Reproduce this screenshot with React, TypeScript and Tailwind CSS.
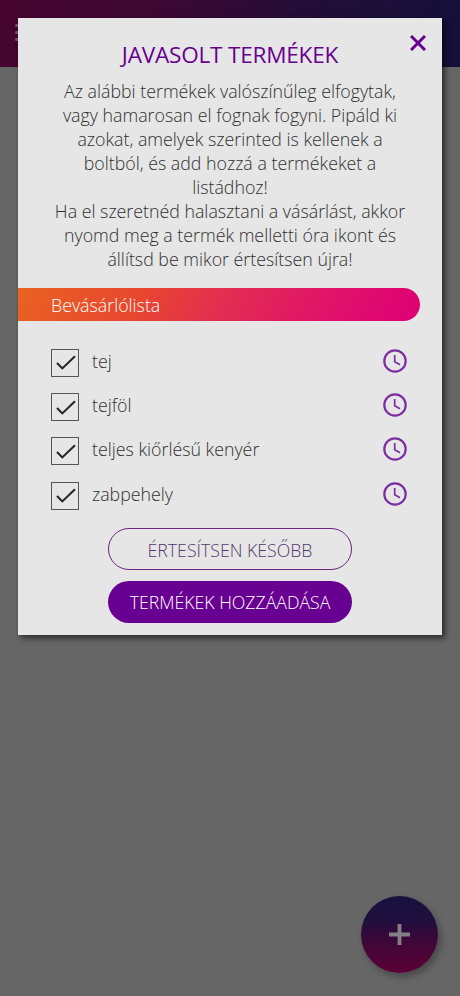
import React from "react";

const products = ["tej", "tejföl", "teljes kiőrlésű kenyér", "zabpehely"];

const infoLines = [
  "Az alábbi termékek valószínűleg elfogytak,",
  "vagy hamarosan el fognak fogyni. Pipáld ki",
  "azokat, amelyek szerinted is kellenek a",
  "boltból, és add hozzá a termékeket a",
  "listádhoz!",
  "Ha el szeretnéd halasztani a vásárlást, akkor",
  "nyomd meg a termék melletti óra ikont és",
  "állítsd be mikor értesítsen újra!",
];

function ClockIcon() {
  return (
    <svg width="24" height="24" viewBox="0 0 24 24" fill="none" stroke="#7c2ea3">
      <circle cx="12" cy="12" r="10.7" strokeWidth="2.2" />
      <path d="M11.7 6v6.7l5.3 3.1" strokeWidth="1.7" />
    </svg>
  );
}

function ProductRow({ name }: { name: string }) {
  return (
    <li className="flex h-[44.4px] items-center">
      <span className="mt-[4px] flex h-7 w-7 items-center justify-center border border-[#555]">
        <svg width="20" height="16" viewBox="0 0 20 16" fill="none" stroke="#262626" strokeWidth="2.1" className="mt-px ml-px">
          <path d="M1 8l5.3 5.4L19 1.3" />
        </svg>
      </span>
      <span className="ml-[13px] flex-1 text-[17.8px] leading-6">{name}</span>
      <button aria-label="Emlékeztető">
        <ClockIcon />
      </button>
    </li>
  );
}

export default function App() {
  return (
    <div className="relative h-[996px] w-[460px] overflow-hidden bg-[#666] font-['Open_Sans',sans-serif] font-light text-[#303030]">
      <header className="flex h-[67px] items-start bg-[linear-gradient(100deg,#46052f_0%,#3c0833_35%,#220d37_65%,#15103a_100%)] pt-6 pl-[15px]">
        <div className="flex flex-col gap-[4px]">
          <span className="h-[3px] w-6 rounded-full bg-[#77536d]" />
          <span className="h-[3px] w-6 rounded-full bg-[#77536d]" />
          <span className="h-[3px] w-6 rounded-full bg-[#77536d]" />
        </div>
      </header>

      <button
        aria-label="Új lista"
        className="absolute top-[896px] left-[361px] flex h-[77px] w-[77px] items-center justify-center rounded-full bg-[linear-gradient(180deg,#18113f_0%,#1e0f3e_30%,#400638_62%,#5b0036_100%)] shadow-[3px_4px_7px_rgba(0,0,0,0.3)]"
      >
        <svg width="21" height="21" viewBox="0 0 21 21" stroke="#828085" strokeWidth="3.8">
          <path d="M10.5 0v21M0 10.5h21" />
        </svg>
      </button>

      <section className="absolute top-[18px] left-[18px] h-[617px] w-[424px] bg-[#e6e6e6] shadow-[3px_3px_6px_rgba(0,0,0,0.6)]">
        <button aria-label="Bezárás" className="absolute top-[17px] right-[16.5px]">
          <svg width="16" height="16" viewBox="0 0 16 16" stroke="#650091" strokeWidth="3">
            <path d="M1 1l14 14M15 1L1 15" />
          </svg>
        </button>

        <h1 className="pt-[21px] text-center text-[22.6px] leading-8 font-normal tracking-[-0.23px] text-[#68008f]">JAVASOLT TERMÉKEK</h1>

        <div className="mt-2 text-center text-[17.8px] leading-6">
          {infoLines.map((line) => (
            <p key={line} className="whitespace-nowrap">{line}</p>
          ))}
        </div>

        <h2 className="mt-[17px] flex h-[33px] w-[402px] items-center rounded-r-full bg-[linear-gradient(115deg,#e96222_0%,#e8472f_30%,#e22c52_52%,#e0116b_78%,#df0075_100%)] pt-px pl-[33px] text-[17.8px] text-white">
          Bevásárlólista
        </h2>

        <ul className="mt-[17.5px] pr-[35px] pl-[33px]">
          {products.map((name) => (
            <ProductRow key={name} name={name} />
          ))}
        </ul>

        <div className="mt-[11.5px] flex flex-col items-center gap-[11px] text-[17.7px]">
          <button className="h-[42px] w-[244px] rounded-full border border-[#6a2482] pt-[3px] text-[#54366f]">ÉRTESÍTSEN KÉSŐBB</button>
          <button className="h-[42px] w-[244px] rounded-full bg-[#680091] pt-[2px] text-white">TERMÉKEK HOZZÁADÁSA</button>
        </div>
      </section>
    </div>
  );
}
